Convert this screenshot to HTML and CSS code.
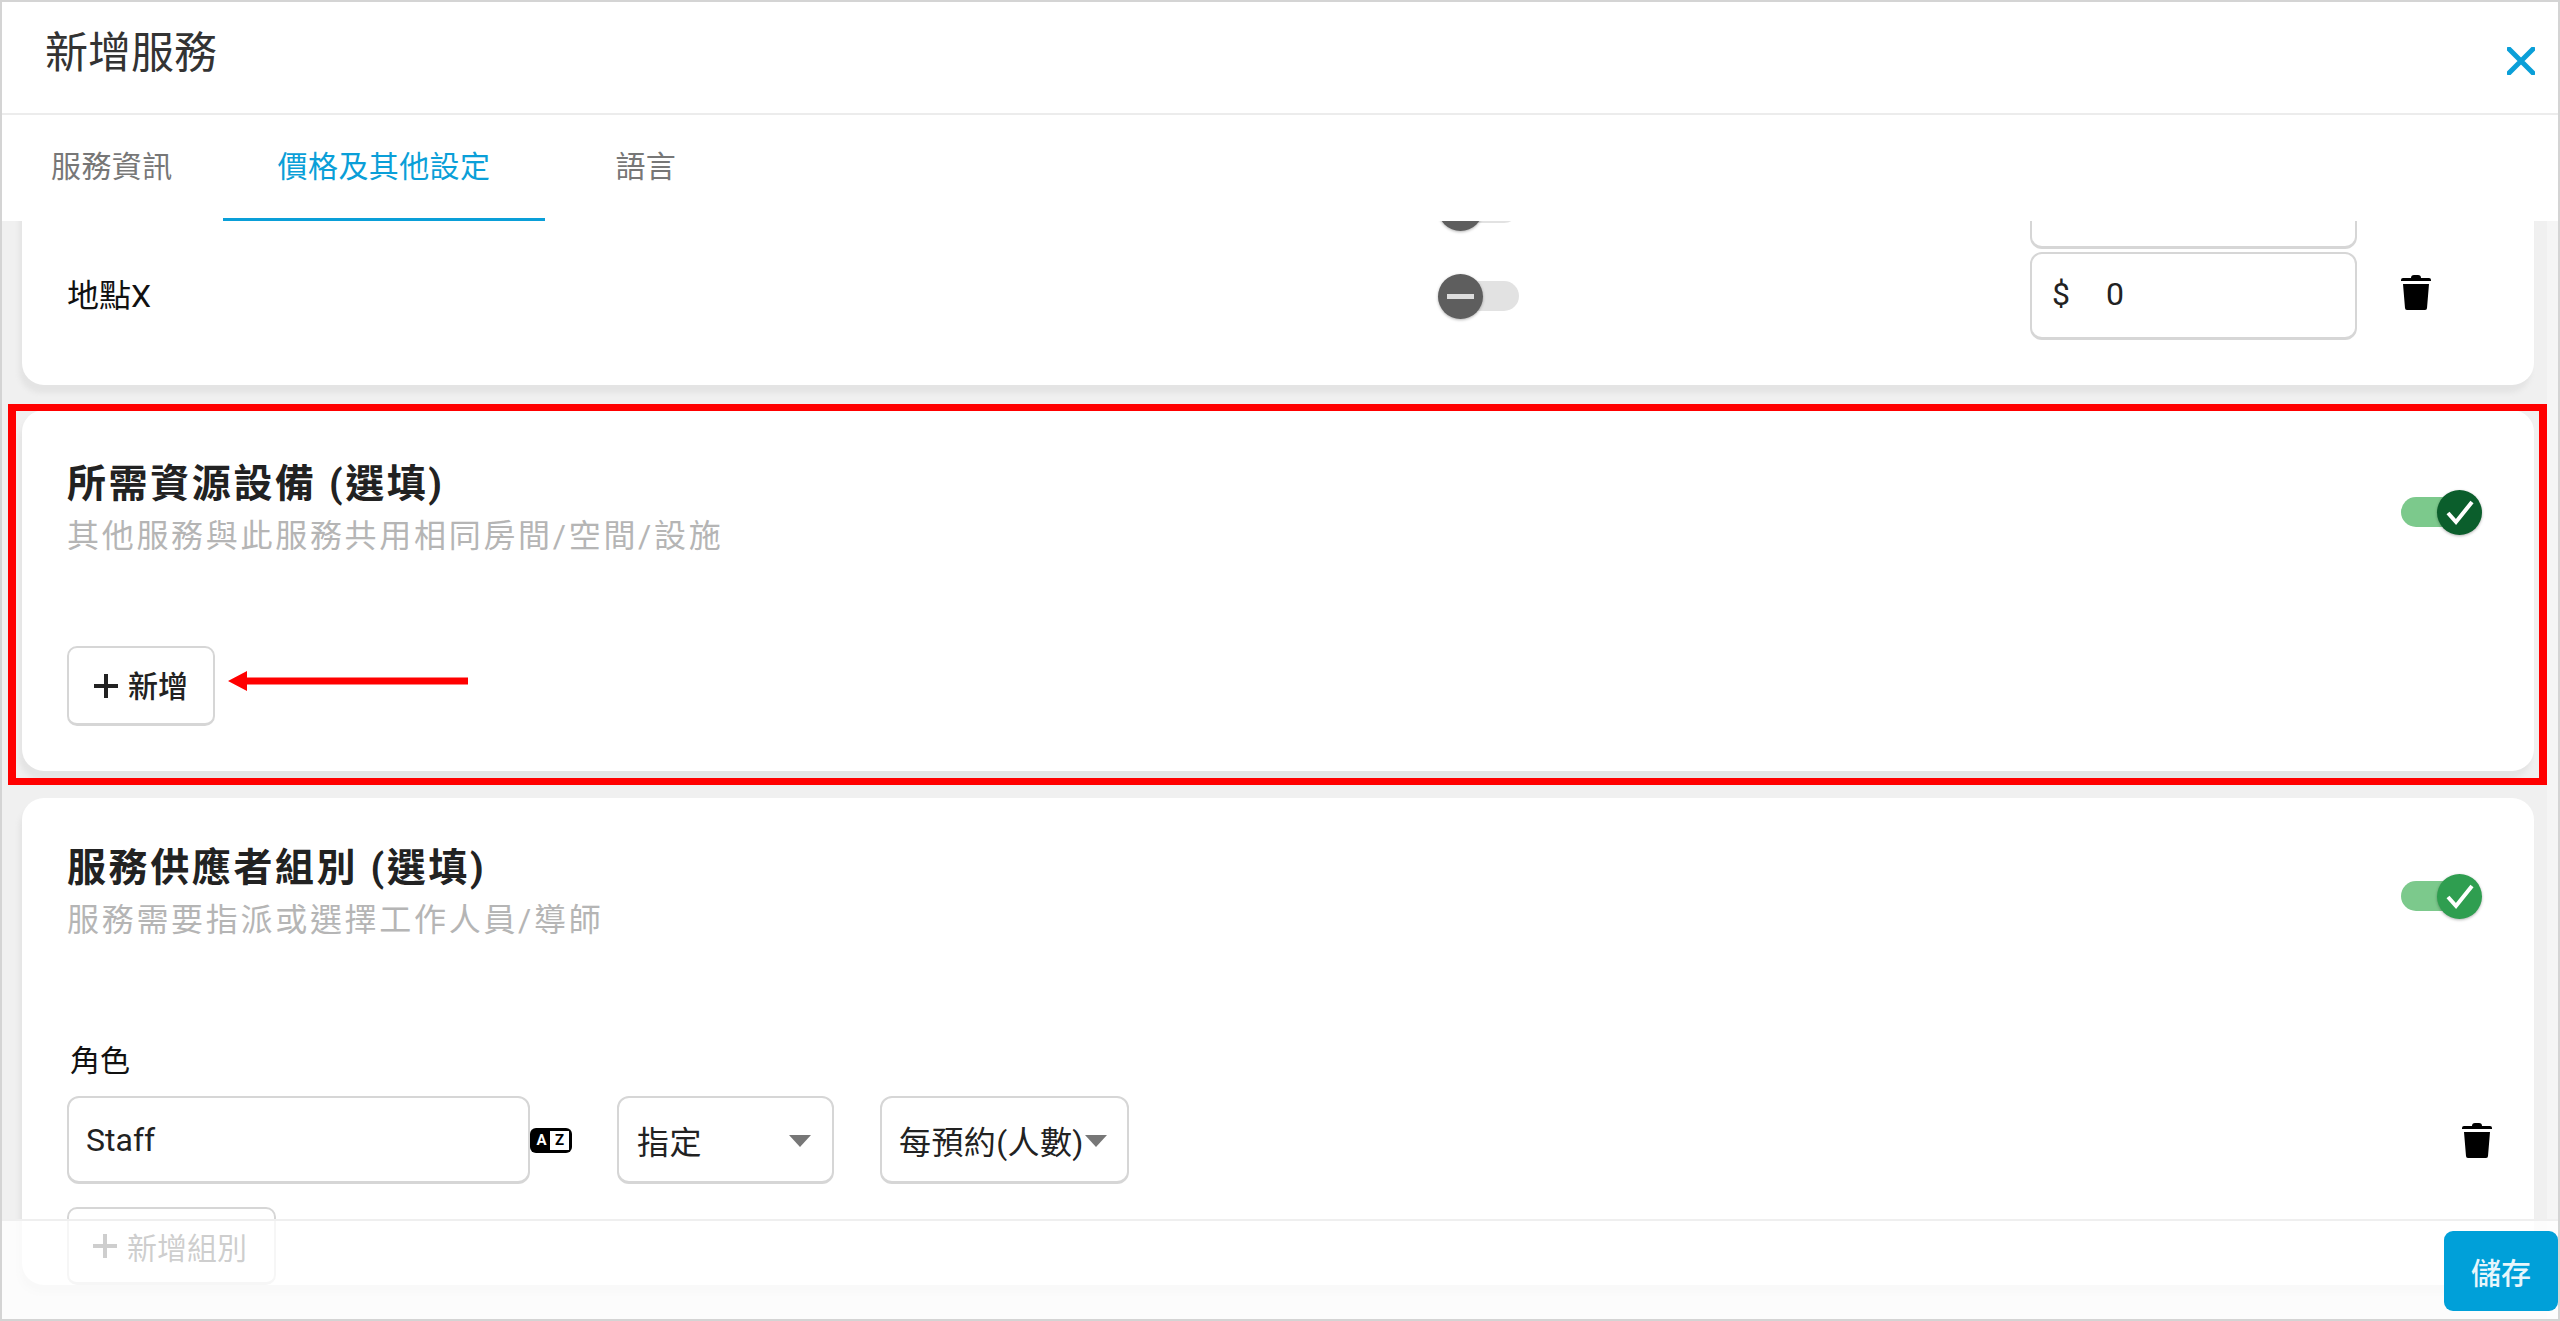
FILE: index.html
```html
<!DOCTYPE html>
<html lang="zh-Hant">
<head>
    <meta charset="utf-8">
    <title>新增服務</title>
    <link rel="stylesheet" href="styles.css">
</head>

<body>
    <div class="modal">
        <div class="modal-head">
            <h1 class="modal-title">新增服務</h1>
            <svg class="close-icon" viewBox="0 0 28 28"><path d="M2 2 L26 26 M26 2 L2 26"/></svg>
        </div>

        <div class="tabs">
            <div class="tab tab-first">服務資訊</div>
            <div class="tab tab-active">價格及其他設定</div>
            <div class="tab tab-last">語言</div>
        </div>

        <div class="content">
            <div class="scroll-body">
                <!-- locations, scrolled partly out of view -->
                <div class="card card-locations">
                    <div class="loc-row loc-row-first">
                        <div class="loc-name"></div>
                        <div class="toggle toggle-off">
                            <span class="knob"><span class="minus"></span></span>
                        </div>
                        <div class="field price-field"></div>
                        <span></span>
                    </div>
                    <div class="loc-row">
                        <div class="loc-name">地點X</div>
                        <div class="toggle toggle-off">
                            <span class="knob"><span class="minus"></span></span>
                        </div>
                        <div class="field price-field"><span class="dollar">$</span>0</div>
                        <svg class="trash-icon" viewBox="0 0 30 35"><path d="M10 3 Q10 0 13 0 H17 Q20 0 20 3 H28 Q30 3 30 5 V6 H0 V5 Q0 3 2 3 Z M2 9 H28 L26 33 Q26 35 24 35 H6 Q4 35 4 33 Z"/></svg>
                    </div>
                </div>

                <!-- resources -->
                <div class="card card-resources">
                    <div class="card-head">
                        <div>
                            <h2 class="card-title">所需資源設備 (選填)</h2>
                            <p class="card-sub">其他服務與此服務共用相同房間/空間/設施</p>
                        </div>
                        <div class="toggle toggle-on toggle-dark">
                            <span class="knob"><svg viewBox="0 0 45 45"><path d="M11 23 L19 32 L35 12"/></svg></span>
                        </div>
                    </div>
                    <div class="add-row">
                        <button type="button" class="add-btn">
                            <svg class="plus-icon" viewBox="0 0 24 24"><path d="M12 0 V24 M0 12 H24"/></svg>
                            <span class="add-text">新增</span>
                        </button>
                        <svg class="arrow" width="240" height="20" viewBox="0 0 240 20"><path d="M0 10 L19 0 V6.500 H240 V13.500 H19 V20 Z"/></svg>
                    </div>
                    <div class="red-box"></div>
                </div>

                <!-- providers -->
                <div class="card card-providers">
                    <div class="card-head">
                        <div>
                            <h2 class="card-title">服務供應者組別 (選填)</h2>
                            <p class="card-sub">服務需要指派或選擇工作人員/導師</p>
                        </div>
                        <div class="toggle toggle-on">
                            <span class="knob"><svg viewBox="0 0 45 45"><path d="M11 23 L19 32 L35 12"/></svg></span>
                        </div>
                    </div>
                    <div class="role-label">角色</div>
                    <div class="role-row">
                        <div class="field role-field">Staff</div>
                        <div class="az-icon"><span class="az-a">A</span><span class="az-z">Z</span></div>
                        <div class="field select select-assign">指定<span class="caret"></span></div>
                        <div class="field select select-count">每預約(人數)<span class="caret"></span></div>
                        <svg class="trash-icon trash-role" viewBox="0 0 30 35"><path d="M10 3 Q10 0 13 0 H17 Q20 0 20 3 H28 Q30 3 30 5 V6 H0 V5 Q0 3 2 3 Z M2 9 H28 L26 33 Q26 35 24 35 H6 Q4 35 4 33 Z"/></svg>
                    </div>
                    <button type="button" class="add-btn add-group">
                        <svg class="plus-icon" viewBox="0 0 24 24"><path d="M12 0 V24 M0 12 H24"/></svg>
                        <span>新增組別</span>
                    </button>
                </div>
            </div>
            <div class="scroll-track"></div>
        </div>

        <div class="modal-foot">
            <button type="button" class="save-btn">儲存</button>
        </div>
    </div>
</body>
</html>
```

FILE: styles.css
```css
* {
    box-sizing: border-box;
}

body {
    margin: 0;
    background: #fff;
    color: #222;
    font-family: Roboto, "Noto Sans CJK TC", sans-serif;
}

button {
    font-family: inherit;
}

.modal {
    position: relative;
    display: flex;
    flex-direction: column;
    height: 1321px;
    overflow: hidden;
    border: 2px solid #d4d4d4;
    background: #fff;
}

.modal-head {
    display: flex;
    justify-content: space-between;
    align-items: center;
    flex: none;
    height: 113px;
    padding: 0 23px 0 43px;
    border-bottom: 2px solid #ececec;
}

.modal-title {
    margin: 0 0 10px;
    font-size: 43px;
    font-weight: 400;
    line-height: 56px;
    color: #333;
}

.close-icon {
    width: 28px;
    height: 28px;
    margin-top: 6px;
    fill: none;
    stroke: #0a9fd8;
    stroke-width: 5;
    stroke-linecap: round;
}

.tabs {
    display: flex;
    flex: none;
    height: 106px;
}

.tab {
    padding: 31px 55px 0;
    font-size: 30px;
    line-height: 42px;
    letter-spacing: .4px;
    color: #777;
}

.tab-first {
    padding: 31px 50px 0 49px;
}

.tab-active {
    border-bottom: 3px solid #0a9fd8;
    color: #0a9fd8;
}

.tab-last {
    margin-left: 15px;
}

.content {
    display: flex;
    flex: 1;
    min-height: 0;
    overflow: hidden;
    background: #f0f0f0;
}

.scroll-body {
    flex: 1;
    min-width: 0;
    padding: 0 13px 0 20px;
}

.scroll-track {
    flex: none;
    width: 11px;
    background: #f5f5f5;
}

.card {
    position: relative;
    border-radius: 22px;
    background: #fff;
    box-shadow: -3px 8px 5px #e4e4e4;
}

.card-locations {
    margin-top: -80px;
    height: 244px;
    padding: 20px 0 0 45px;
}

.loc-row {
    display: grid;
    grid-template-columns: 1371px 592px 327px 30px;
    column-gap: 0;
    align-items: center;
    margin-bottom: 3px;
    position: relative;
}

.loc-row .trash-icon {
    margin-left: 44px;
    margin-top: -8px;
}

.loc-row-first .toggle {
    margin-top: 6px;
}

.loc-name {
    font-size: 32px;
    line-height: 40px;
    color: #111;
}

.field {
    display: flex;
    align-items: center;
    height: 88px;
    border: 2px solid #d6d6d6;
    border-bottom-width: 3px;
    border-radius: 12px;
    background: #fff;
    font-size: 32px;
    color: #222;
}

.price-field {
    padding-left: 20px;
    padding-bottom: 4px;
}

.dollar {
    width: 54px;
}

.trash-icon {
    flex: none;
    width: 30px;
    height: 35px;
    fill: #000;
}

.toggle {
    position: relative;
    flex: none;
    width: 81px;
    height: 45px;
}

.toggle::before {
    content: "";
    position: absolute;
    top: 7px;
    height: 30px;
    border-radius: 15px;
}

.knob {
    position: absolute;
    top: 0;
    display: flex;
    align-items: center;
    justify-content: center;
    width: 45px;
    height: 45px;
    border-radius: 50%;
    box-shadow: 0 1px 3px rgba(0, 0, 0, .3);
}

.toggle-off::before {
    left: 0;
    right: 0;
    background: #e2e2e2;
}

.toggle-off .knob {
    left: 0;
    background: #5e5e5e;
}

.minus {
    width: 27px;
    height: 5px;
    background: #ddd;
}

.toggle-on::before {
    left: 0;
    right: 10px;
    background: #7cc98c;
}

.toggle-on .knob {
    right: 0;
    background: #2f9e50;
}

.toggle-dark .knob {
    background: #0b5e2c;
}

.knob svg {
    width: 45px;
    height: 45px;
    fill: none;
    stroke: #fff;
    stroke-width: 4;
}

.card-resources {
    margin-top: 25px;
    height: 361px;
    padding: 52px 52px 0 45px;
}

.card-providers {
    margin-top: 27px;
    padding: 48px 52px 0 45px;
}

.card-head {
    display: flex;
    justify-content: space-between;
    align-items: flex-start;
}

.card-head .toggle {
    margin-top: 28px;
}

.card-title {
    margin: 0 0 10px;
    font-size: 39px;
    font-weight: 700;
    line-height: 44px;
    letter-spacing: 2.600px;
    color: #222;
}

.card-sub {
    margin: 0;
    font-size: 32px;
    line-height: 40px;
    letter-spacing: 2.700px;
    color: #b5b5b5;
}

.add-row {
    display: flex;
    align-items: center;
    gap: 13px;
    margin-top: 90px;
}

.add-btn {
    display: flex;
    align-items: center;
    gap: 10px;
    height: 80px;
    padding: 0 25px;
    border: 2px solid #d6d6d6;
    border-bottom-width: 3px;
    border-radius: 10px;
    background: #fff;
    font-size: 30px;
    color: #222;
}

.add-text {
    margin-bottom: 3px;
    font-size: 30px;
    font-weight: 500;
}

.plus-icon {
    flex: none;
    width: 24px;
    height: 24px;
    fill: none;
    stroke: currentColor;
    stroke-width: 4;
}

.arrow {
    margin-bottom: 10px;
    fill: #f00;
}

.red-box {
    position: absolute;
    top: -6px;
    left: -14px;
    right: -13px;
    bottom: -14px;
    border: 7px solid #f00;
    border-left-width: 8px;
    border-right-width: 8px;
}

.role-label {
    margin: 101px 0 0 3px;
    font-size: 30px;
    line-height: 40px;
    color: #111;
}

.role-row {
    display: flex;
    align-items: center;
    margin-top: 15px;
}

.role-field {
    flex: none;
    width: 463px;
    padding-left: 17px;
}

.az-icon {
    display: flex;
    align-items: center;
    flex: none;
    width: 42px;
    height: 25px;
    padding: 3px;
    border-radius: 6px;
    background: #000;
    font-size: 15px;
    font-weight: 700;
    line-height: 19px;
}

.az-a {
    flex: 1;
    color: #fff;
    text-align: center;
}

.az-z {
    width: 19px;
    height: 19px;
    background: #fff;
    color: #000;
    text-align: center;
}

.select {
    position: relative;
    flex: none;
    padding-left: 18px;
    letter-spacing: .4px;
}

.select-assign {
    width: 217px;
    margin-left: 45px;
}

.select-count {
    width: 249px;
    margin-left: 46px;
    padding-left: 17px;
}

.caret {
    position: absolute;
    top: 37px;
    right: 21px;
    border-left: 11px solid transparent;
    border-right: 11px solid transparent;
    border-top: 12px solid #777;
}

.select-count .caret {
    right: 20px;
}

.trash-role {
    margin-left: auto;
    margin-right: -10px;
}

.add-group {
    width: 209px;
    height: 78px;
    margin-top: 23px;
    padding: 0 24px;
    white-space: nowrap;
}

.modal-foot {
    position: absolute;
    left: 0;
    right: 0;
    bottom: 0;
    display: flex;
    justify-content: flex-end;
    align-items: center;
    height: 100px;
    border-top: 2px solid #efefef;
    background: rgba(255, 255, 255, .78);
}

.save-btn {
    width: 114px;
    height: 80px;
    margin-top: 2px;
    border: none;
    border-radius: 9px;
    background: #00a0d9;
    font-size: 30px;
    font-weight: 500;
    color: #e8f6fc;
}
```
